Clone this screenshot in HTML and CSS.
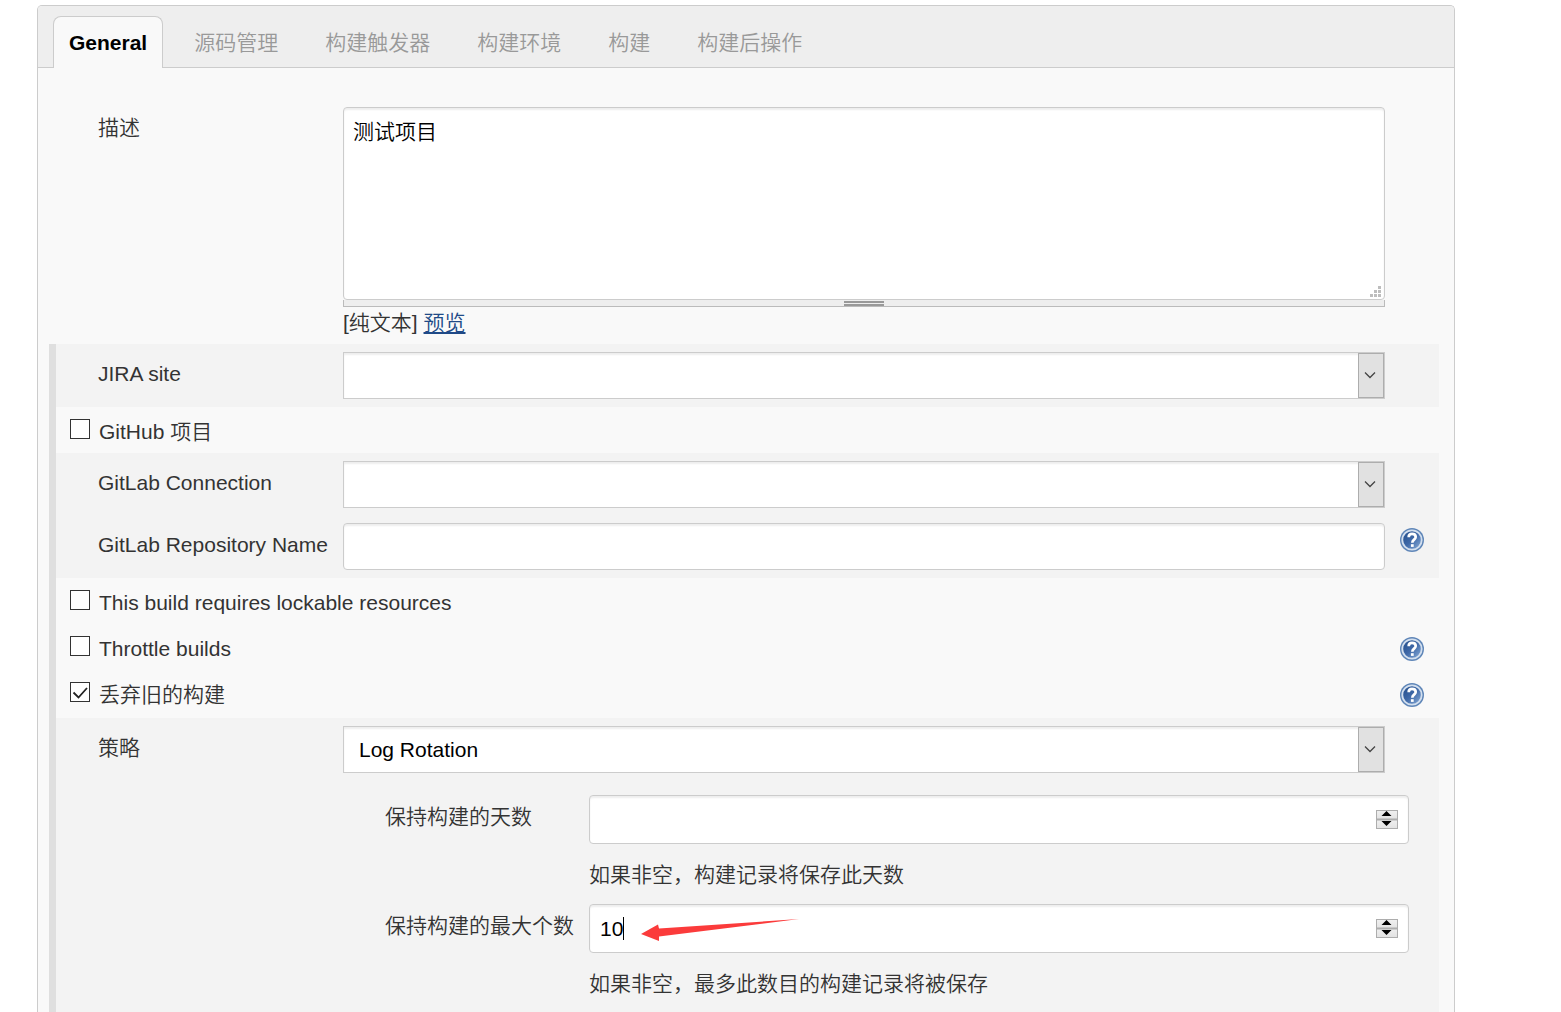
FILE: index.html
```html
<!DOCTYPE html>
<html lang="zh-CN">
<head>
<meta charset="utf-8">
<title>General</title>
<link rel="stylesheet" href="styles.css">
</head>
<body>
<svg class="defs" width="0" height="0" aria-hidden="true">
  <defs>
    <linearGradient id="ball" x1="0" y1="0" x2="1" y2="1">
      <stop offset="0" stop-color="#204a87"/>
      <stop offset="0.5" stop-color="#3f69a8"/>
      <stop offset="1" stop-color="#8fb2dc"/>
    </linearGradient>
    <linearGradient id="key" x1="0" y1="0" x2="0" y2="1">
      <stop offset="0" stop-color="#f0f0f0"/>
      <stop offset="1" stop-color="#e2e2e2"/>
    </linearGradient>
    <symbol id="help" viewBox="0 0 24 24">
      <circle cx="12" cy="12" r="12" fill="#5f86b8"/>
      <circle cx="12" cy="12" r="9.700" fill="url(#ball)" stroke="#d3dfee" stroke-width="1.800"/>
      <path d="M8.700 9.2C8.700 6.9 10 5.9 12 5.9s3.700 1.1 3.700 3.100c0 2.600-3.400 2.700-3.400 5.700" fill="none" stroke="#fff" stroke-width="2.700"/>
      <rect x="10.900" y="16.200" width="2.800" height="2.700" fill="#fff"/>
    </symbol>
    <symbol id="drop" viewBox="0 0 26 45">
      <rect x="0.500" y="0.500" width="25" height="44" fill="#e1e1e1" stroke="#adadad"/>
      <path d="M7 19.500l5 5 5-5" fill="none" stroke="#444" stroke-width="1.300"/>
    </symbol>
    <symbol id="spin" viewBox="0 0 22 19">
      <rect x="0.500" y="0.500" width="21" height="9" fill="url(#key)" stroke="#adadad"/>
      <rect x="0.500" y="9.500" width="21" height="9" fill="url(#key)" stroke="#adadad"/>
      <path d="M0 9.500h22" stroke="#adadad" stroke-width="2"/>
      <path d="M5.500 6h10l-5-5zM5.500 11h10l-5 5z" fill="#000"/>
    </symbol>
  </defs>
</svg>
<main class="panel">
  <nav class="tabs">
    <a class="tab tab-active" href="#general">General</a>
    <a class="tab" href="#scm">源码管理</a>
    <a class="tab" href="#triggers">构建触发器</a>
    <a class="tab" href="#environment">构建环境</a>
    <a class="tab" href="#build">构建</a>
    <a class="tab" href="#post">构建后操作</a>
  </nav>
  <form class="config">
    <div class="row description">
      <label class="name" for="description">描述</label>
      <div class="field">
        <div class="area">
          <textarea id="description">测试项目</textarea>
          <svg class="grip" width="11" height="11" aria-hidden="true"><path d="M8 0h3v3h-3zM4 4h3v3h-3zM8 4h3v3h-3zM0 8h3v3h-3zM4 8h3v3h-3zM8 8h3v3h-3z" fill="#bdbdbd"/></svg>
        </div>
        <div class="handle"><span class="handle-mark"></span></div>
        <div class="format">[纯文本] <a href="#preview">预览</a></div>
      </div>
    </div>
    <div class="options">
      <div class="block">
        <div class="row">
          <label class="name" for="jira">JIRA site</label>
          <div class="select"><select id="jira"><option></option></select><svg class="drop"><use href="#drop"/></svg></div>
        </div>
      </div>
      <div class="check"><input type="checkbox" id="github"><label for="github">GitHub 项目</label></div>
      <div class="block">
        <div class="row">
          <label class="name" for="connection">GitLab Connection</label>
          <div class="select"><select id="connection"><option></option></select><svg class="drop"><use href="#drop"/></svg></div>
        </div>
        <div class="row">
          <label class="name" for="repository">GitLab Repository Name</label>
          <input class="text" type="text" id="repository">
          <a class="help" href="#help-repository" aria-label="Help"><svg><use href="#help"/></svg></a>
        </div>
      </div>
      <div class="checks">
        <div class="check"><input type="checkbox" id="lockable"><label for="lockable">This build requires lockable resources</label></div>
        <div class="check"><input type="checkbox" id="throttle"><label for="throttle">Throttle builds</label><a class="help" href="#help-throttle" aria-label="Help"><svg><use href="#help"/></svg></a></div>
        <div class="check"><input type="checkbox" id="discard" checked><label for="discard">丢弃旧的构建</label><a class="help" href="#help-discard" aria-label="Help"><svg><use href="#help"/></svg></a></div>
      </div>
      <div class="block block-last">
        <div class="row">
          <label class="name" for="strategy">策略</label>
          <div class="select"><select id="strategy"><option>Log Rotation</option></select><svg class="drop"><use href="#drop"/></svg></div>
        </div>
        <div class="nested">
          <label class="name" for="days">保持构建的天数</label>
          <div class="number"><input class="text" type="number" id="days"><svg class="spin"><use href="#spin"/></svg></div>
          <p class="hint">如果非空，构建记录将保存此天数</p>
          <label class="name" for="count">保持构建的最大个数</label>
          <div class="number">
            <input class="text" type="number" id="count" value="10">
            <span class="caret"></span>
            <svg class="arrow" width="158" height="24" viewBox="0 0 158 24" aria-hidden="true"><path d="M0 16L17 6.500L18 10.500L158 1L18 18.500L18 23z" fill="#fb3b3b"/></svg>
            <svg class="spin"><use href="#spin"/></svg>
          </div>
          <p class="hint">如果非空，最多此数目的构建记录将被保存</p>
        </div>
      </div>
    </div>
  </form>
</main>
</body>
</html>
```

FILE: styles.css
```css
* {
  box-sizing: border-box;
}

body {
  margin: 0;
  background: #fff;
  color: #333;
  font: 350 21px/24px "Liberation Sans", "Noto Sans CJK SC", sans-serif;
}

input,
select,
textarea {
  margin: 0;
  color: #000;
  font: inherit;
}

.defs {
  position: absolute;
}

.panel {
  display: flex;
  flex-direction: column;
  min-height: calc(100vh - 5px);
  margin: 5px 106px 0 37px;
  border: 1px solid #ccc;
  border-bottom: 0;
  border-radius: 5px 5px 0 0;
  background: #f9f9f9;
}

.tabs {
  display: flex;
  gap: 15px;
  padding: 10px 15px 0;
  border-bottom: 1px solid #ccc;
  border-radius: 4px 4px 0 0;
  background: #eee;
}

.tab {
  margin-bottom: -1px;
  padding: 14px 15px 13px;
  border: 1px solid transparent;
  border-bottom: 0;
  color: #999;
  text-decoration: none;
  white-space: nowrap;
}

.tab-active {
  border-color: #ccc;
  border-radius: 8px 8px 0 0;
  background: #f9f9f9;
  color: #000;
  font-weight: 700;
}

.config {
  display: flex;
  flex: 1;
  flex-direction: column;
  padding: 39px 15px 0 11px;
}

.row {
  display: grid;
  grid-template-columns: 245px 1fr 54px;
  align-items: start;
  padding-left: 42px;
}

.name {
  padding-top: 10px;
  white-space: nowrap;
}

.description {
  padding: 0 0 9px 49px;
}

.description .name {
  padding-top: 9px;
}

.area {
  position: relative;
}

textarea {
  display: block;
  width: 100%;
  height: 193px;
  padding: 12px 9px;
  border: 1px solid #ccc;
  border-radius: 4px;
  box-shadow: inset 0 2px 2px #eee;
  resize: none;
}

.grip {
  position: absolute;
  right: 4px;
  bottom: 3px;
}

.handle {
  height: 7px;
  padding-top: 1px;
  border: 1px solid #bbb;
  border-top: 0;
  background: #eee;
}

.handle-mark {
  display: block;
  width: 40px;
  height: 5px;
  margin: 0 auto;
  border: solid #999;
  border-width: 2px 0;
}

.format {
  padding-top: 4px;
}

.format a {
  color: #204a87;
}

.options {
  flex: 1;
  display: flex;
  flex-direction: column;
  border-left: 7px solid #dfdfdf;
}

.block {
  display: grid;
  gap: 15px;
  padding: 8px 0;
  background: #f3f3f3;
}

.block-last {
  flex: 1;
  align-content: start;
  gap: 22px;
}

.select,
.number {
  position: relative;
}

select {
  display: block;
  width: 100%;
  height: 47px;
  padding: 0 40px 0 15px;
  border: 1px solid #ccc;
  border-radius: 0;
  background: #fff;
  box-shadow: inset 0 2px 2px #eee;
  appearance: none;
}

.drop {
  position: absolute;
  top: 1px;
  right: 1px;
  width: 26px;
  height: 45px;
  pointer-events: none;
}

.text {
  display: block;
  width: 100%;
  height: 47px;
  padding: 0 10px;
  border: 1px solid #ccc;
  border-radius: 4px;
  background: #fff;
  box-shadow: inset 0 2px 2px #eee;
  appearance: textfield;
}

.number .text {
  height: 49px;
}

.text::-webkit-inner-spin-button {
  display: none;
}

.checks {
  padding-bottom: 2px;
}

.check {
  display: flex;
  align-items: center;
  gap: 9px;
  height: 46px;
  padding-left: 14px;
}

.check label {
  padding-top: 4px;
}

.check input {
  width: 20px;
  height: 20px;
  margin-bottom: 2px;
  border: 1px solid #333;
  background: #fff;
  appearance: none;
}

.check input:checked {
  background: #fff url("data:image/svg+xml,%3Csvg xmlns='http://www.w3.org/2000/svg' width='18' height='18'%3E%3Cpath d='M2.500 9.500l5 5L16 5' fill='none' stroke='%23222' stroke-width='1.800'/%3E%3C/svg%3E") center no-repeat;
}

.help {
  display: block;
  padding: 5px 15px;
}

.check .help {
  margin-left: auto;
  padding: 4px 15px 0;
}

.help svg {
  display: block;
  width: 24px;
  height: 24px;
}

.nested {
  display: grid;
  grid-template-columns: 204px 1fr;
  align-items: start;
  margin-left: 287px;
  padding: 0 30px 0 42px;
}

.hint {
  grid-column: 2;
  margin: 0;
  padding: 19px 0 17px;
}

.spin {
  position: absolute;
  top: 15px;
  right: 11px;
  width: 22px;
  height: 19px;
}

.caret {
  position: absolute;
  top: 13px;
  left: 34px;
  width: 1px;
  height: 23px;
  background: #000;
}

.arrow {
  position: absolute;
  top: 14px;
  left: 52px;
  pointer-events: none;
}
```
